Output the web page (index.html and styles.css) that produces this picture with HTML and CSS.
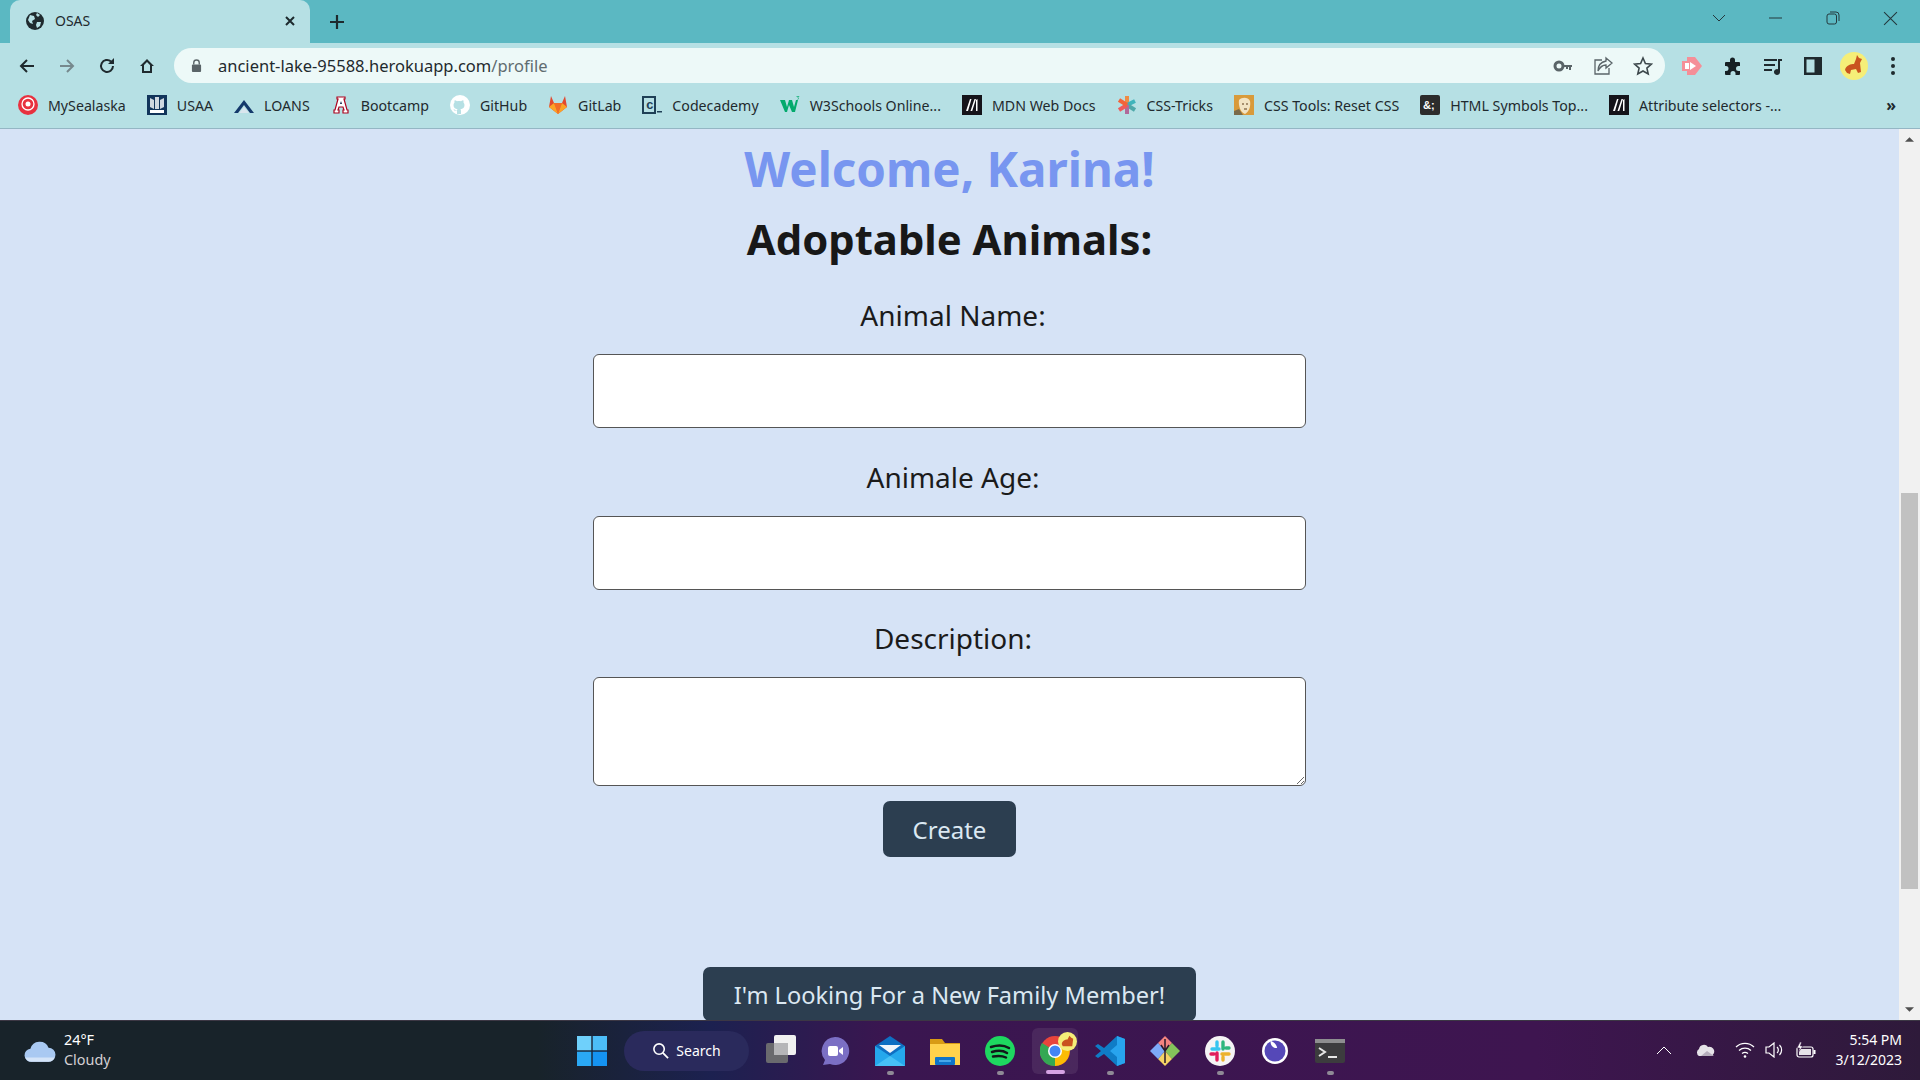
FILE: index.html
```html
<!DOCTYPE html>
<html lang="en">
<head>
<meta charset="utf-8">
<title>OSAS</title>
<link rel="stylesheet" href="styles.css">
</head>
<body>
<div class="screen">
  <div class="tabstrip">
    <div class="tab">
      <svg class="favicon" viewBox="0 0 18 18"><circle cx="9" cy="9" r="9" fill="#1f2a2e"/><path d="M4 3l4 1 1 3-3 2 1 3-3-1-2-3zM11 10l4 0-1 4-3 2-1-3zM11 1l3 2-2 2-2-2z" fill="#b6e0e4"/></svg>
      <span class="tab-title">OSAS</span>
      <svg class="tab-close" viewBox="0 0 12 12"><path d="M2 2l8 8M10 2l-8 8" stroke="#1d2a2e" stroke-width="2" fill="none"/></svg>
    </div>
    <svg class="newtab" viewBox="0 0 16 16"><path d="M8 1v14M1 8h14" stroke="#1d2a2e" stroke-width="2.2" fill="none"/></svg>
    <div class="window-controls">
      <svg class="wc wc-down" viewBox="0 0 14 14"><path d="M1 4l6 6 6-6" stroke="#24383d" fill="none"/></svg>
      <svg class="wc wc-min" viewBox="0 0 14 14"><path d="M0 7h13" stroke="#24383d" fill="none"/></svg>
      <svg class="wc wc-max" viewBox="0 0 14 14"><rect x="1" y="3" width="9.500" height="10" rx="2" stroke="#24383d" fill="none"/><path d="M4 1h6a3 3 0 0 1 3 3v6" stroke="#24383d" fill="none"/></svg>
      <svg class="wc wc-close" viewBox="0 0 14 14"><path d="M1 1l12 12M13 1L1 13" stroke="#24383d" fill="none"/></svg>
    </div>
  </div>

  <div class="toolbar">
    <svg class="tool" viewBox="0 0 18 18"><path d="M16 9H3M9 3L3 9l6 6" stroke="#1f2a2e" stroke-width="2" fill="none"/></svg>
    <svg class="tool" viewBox="0 0 18 18"><path d="M2 9h13M9 3l6 6-6 6" stroke="#76898d" stroke-width="2" fill="none"/></svg>
    <svg class="tool" viewBox="0 0 18 18"><path d="M15 9a6 6 0 1 1-2-4.500" stroke="#1f2a2e" stroke-width="2" fill="none"/><path d="M16 1v6h-6z" fill="#1f2a2e"/></svg>
    <svg class="tool" viewBox="0 0 18 18"><path d="M9 2L2 9h2v7h10V9h2zM6 14V8l3-3 3 3v6z" fill="#1f2a2e"/></svg>
    <div class="omnibox">
      <svg class="lock" viewBox="0 0 12 14"><path d="M3 6V4a3 3 0 0 1 6 0v2" stroke="#5a6468" stroke-width="1.500" fill="none"/><rect x="1" y="6" width="10" height="8" rx="1" fill="#5a6468"/></svg>
      <span class="url">ancient-lake-95588.herokuapp.com<span class="url-path">/profile</span></span>
      <span class="omni-spacer"></span>
      <svg class="omni-icon" viewBox="0 0 20 20"><circle cx="6" cy="10" r="4" fill="none" stroke="#5a6468" stroke-width="3"/><path d="M10 9h9v2h-1v3h-2v-3h-1v2h-2v-2h-3z" fill="#5a6468"/></svg>
      <svg class="omni-icon" viewBox="0 0 20 20"><path d="M9 4H2v14h14v-6" stroke="#5a6468" stroke-width="1.300" fill="none"/><path d="M13 2l6 5-6 5V9c-4 0-6 2-8 6 0-6 3-9 8-10z" stroke="#5a6468" stroke-width="1.300" fill="#edf9f8"/></svg>
      <svg class="omni-icon" viewBox="0 0 20 20"><path d="M10 2l2.400 5.500 6 .6-4.500 4 1.300 5.900L10 15l-5.200 3 1.300-5.900-4.500-4 6-.6z" stroke="#3d484c" stroke-width="1.600" fill="none"/></svg>
    </div>
    <svg class="ext ext-pink" viewBox="0 0 22 20"><path d="M1 5h5V1l8 0 7 9-7 9H6v-4H1z" fill="#f58f98"/><path d="M9 6l6 4-6 4z" fill="#fff"/><rect x="4" y="7" width="4" height="6" fill="#fff"/></svg>
    <svg class="ext" viewBox="0 0 20 20"><path d="M3 6h4V4a2.500 2.500 0 0 1 5 0v2h4a1 1 0 0 1 1 1v3h-1.500a2.500 2.500 0 0 0 0 5H17v3a1 1 0 0 1-1 1h-3.500v-1.500a2.500 2.500 0 0 0-5 0V19H3a1 1 0 0 1-1-1v-3h1a2.500 2.500 0 0 0 0-5H2V7a1 1 0 0 1 1-1z" fill="#162024"/></svg>
    <svg class="ext" viewBox="0 0 20 20"><path d="M1 4h13M1 9h11M1 14h8" stroke="#1f2a2e" stroke-width="2" fill="none"/><path d="M16 3h3v2h-2v11a3 3 0 1 1-2-2.800V3z" fill="#1f2a2e"/></svg>
    <svg class="ext" viewBox="0 0 20 20"><rect x="1" y="1" width="18" height="18" fill="#1f2a2e"/><rect x="3.500" y="3.500" width="8" height="13" fill="#b6e0e4"/></svg>
    <svg class="avatar" viewBox="0 0 28 28"><circle cx="14" cy="14" r="14" fill="#f5ee78"/><path d="M5 18c1-5 6-6 9-6l2-5 1-4 2 3 3 1-2 4 1 9-3 1-2-4-5 1-1 4-3-1z" fill="#c9541f"/></svg>
    <svg class="ext ext-dots" viewBox="0 0 20 20"><circle cx="10" cy="3" r="2" fill="#1f2a2e"/><circle cx="10" cy="10" r="2" fill="#1f2a2e"/><circle cx="10" cy="17" r="2" fill="#1f2a2e"/></svg>
  </div>

  <div class="bookmarks">
    <a class="bm"><svg class="bm-icon" viewBox="0 0 20 20"><circle cx="10" cy="10" r="10" fill="#e8313f"/><circle cx="10" cy="9" r="6" fill="none" stroke="#fff" stroke-width="1.300"/><circle cx="10" cy="9" r="2.500" fill="#fff"/></svg>MySealaska</a>
    <a class="bm"><svg class="bm-icon" viewBox="0 0 20 20"><rect width="20" height="20" fill="#12355b"/><path d="M3 3l4 2v9l-4-2zM17 3l-4 2v9l4-2zM8 2h4v12H8z" fill="#cfd8e0"/><rect x="3" y="15" width="14" height="3" fill="#fff"/></svg>USAA</a>
    <a class="bm"><svg class="bm-icon" viewBox="0 0 20 20"><path d="M0 18L10 5l10 13h-4l-6-8-6 8z" fill="#14396b"/><path d="M5 18l5-6 5 6z" fill="#d9e6ee"/></svg>LOANS</a>
    <a class="bm"><svg class="bm-icon" viewBox="0 0 20 20"><path d="M6 2h8v2h-1l3 11h1v3h-5v-3h1l-1-3H8l-1 3h1v3H3v-3h1L7 4H6z" fill="#fff" stroke="#ab0520" stroke-width="1.200"/><path d="M9 9h2l-1-3z" fill="#0c234b"/></svg>Bootcamp</a>
    <a class="bm"><svg class="bm-icon" viewBox="0 0 20 20"><circle cx="10" cy="10" r="10" fill="#fff"/><path d="M7 19v-3c-2 .4-3-.5-3.500-2 1 .2 1.500 1 2 1.500.5.300 1 .2 1.500 0 0-.6.300-1 .6-1.300C5 14 3.500 12.500 3.500 10c0-1 .3-1.800 1-2.500-.2-.7-.1-1.500.2-2.300.8 0 1.600.4 2.300 1 1.300-.4 2.700-.4 4 0 .7-.6 1.500-1 2.300-1 .3.800.4 1.600.2 2.300.7.700 1 1.500 1 2.500 0 2.500-1.500 4-4.100 4.200.4.400.6 1 .6 1.600V19z" fill="#b6e0e4"/></svg>GitHub</a>
    <a class="bm"><svg class="bm-icon" viewBox="0 0 20 20"><path d="M10 19L1 12 3 1l3 7h8l3-7 2 11z" fill="#e2492f"/><path d="M10 19L6 8h8z" fill="#f26d26"/><path d="M10 19l-9-7 5-4zM10 19l9-7-5-4z" fill="#fca326"/></svg>GitLab</a>
    <a class="bm"><svg class="bm-icon" viewBox="0 0 20 20"><rect x="1" y="2" width="12" height="16" fill="none" stroke="#1f4056" stroke-width="2"/><text class="cc-letter" x="4" y="14">c</text><rect x="15" y="16" width="5" height="1.500" fill="#1f4056"/></svg>Codecademy</a>
    <a class="bm"><svg class="bm-icon" viewBox="0 0 20 20"><path d="M0 5h5l2 7 2-7h3l2 7 2-7h2l-3 12h-3l-3-7-2 7H5z" fill="#04aa6d"/><path d="M16.500 1.500h2.500l-1.200 1.300c.8.200 1 1.500-.2 1.700" stroke="#04aa6d" stroke-width=".7" fill="none"/></svg>W3Schools Online...</a>
    <a class="bm"><svg class="bm-icon" viewBox="0 0 20 20"><rect width="20" height="20" fill="#15141a"/><path d="M4 16L8 4h1.500L6 16zM8.500 16l4-12H14l-3.800 12zM14 16V5l1.500-1v12z" fill="#fff"/></svg>MDN Web Docs</a>
    <a class="bm"><svg class="bm-icon" viewBox="0 0 20 20"><path d="M10 1v9" stroke="#ef8c46" stroke-width="4"/><path d="M10 10l8-4" stroke="#3fb4bb" stroke-width="4"/><path d="M10 10l8 5" stroke="#4fa8a9" stroke-width="4"/><path d="M10 10v9" stroke="#b06a9a" stroke-width="4"/><path d="M10 10l-8 5" stroke="#ee5b5b" stroke-width="4"/><path d="M10 10L2 5" stroke="#f2643a" stroke-width="4"/></svg>CSS-Tricks</a>
    <a class="bm"><svg class="bm-icon" viewBox="0 0 20 20"><rect width="20" height="20" fill="#d99a3a"/><path d="M5 5c3-3 9-3 11 1 1 5-1 11-5 13-4-1-7-8-6-14z" fill="#f2e3c4"/><path d="M8 9h2M12 9h2M10 14h3" stroke="#5a3a1a" stroke-width="1.200"/><path d="M0 20v-4l5-2 4 6z" fill="#7a6a4a"/></svg>CSS Tools: Reset CSS</a>
    <a class="bm"><svg class="bm-icon" viewBox="0 0 20 20"><rect width="20" height="20" rx="2" fill="#2c2c2c"/><text class="amp-text" x="3" y="14">&amp;;</text></svg>HTML Symbols Top...</a>
    <a class="bm"><svg class="bm-icon" viewBox="0 0 20 20"><rect width="20" height="20" fill="#15141a"/><path d="M4 16L8 4h1.500L6 16zM8.500 16l4-12H14l-3.800 12zM14 16V5l1.500-1v12z" fill="#fff"/></svg>Attribute selectors -...</a>
    <span class="bm-more">»</span>
  </div>

  <div class="viewport">
    <main class="page">
      <h1 class="welcome">Welcome, Karina!</h1>
      <h2 class="subhead">Adoptable Animals:</h2>
      <form class="animal-form">
        <label class="field-label">Animal Name:</label>
        <input class="field" type="text">
        <label class="field-label">Animale Age:</label>
        <input class="field" type="text">
        <label class="field-label">Description:</label>
        <textarea class="field field-area"></textarea>
        <button class="btn btn-create" type="button">Create</button>
      </form>
      <button class="btn btn-family" type="button">I'm Looking For a New Family Member!</button>
    </main>
    <div class="scrollbar">
      <svg class="sb-arrow" viewBox="0 0 10 5"><path d="M0 5l5-5 5 5z" fill="#505050"/></svg>
      <div class="sb-track"><div class="sb-thumb"></div></div>
      <svg class="sb-arrow" viewBox="0 0 10 5"><path d="M0 0l5 5 5-5z" fill="#505050"/></svg>
    </div>
  </div>

  <div class="taskbar">
    <div class="weather">
      <svg class="weather-icon" viewBox="0 0 30 22"><path d="M7 21a6 6 0 0 1-1-12 9 9 0 0 1 17-1 6.500 6.500 0 0 1 0 13z" fill="#a9c9f2"/><path d="M7 21c-3 0-5-2-6-4h28c-1 2-3 4-6 4z" fill="#d4e4f8"/></svg>
      <div class="weather-text"><span>24°F</span><span class="weather-sub">Cloudy</span></div>
    </div>
    <div class="task-center">
      <svg class="start" viewBox="0 0 30 30"><rect width="14.300" height="14.300" fill="#6fd0fb"/><rect x="15.700" width="14.300" height="14.300" fill="#4cbdf8"/><rect y="15.700" width="14.300" height="14.300" fill="#2aa8f5"/><rect x="15.700" y="15.700" width="14.300" height="14.300" fill="#1593f2"/></svg>
      <div class="search-pill">
        <svg class="search-icon" viewBox="0 0 18 18"><circle cx="7.500" cy="7.500" r="5.500" stroke="#fff" stroke-width="1.700" fill="none"/><path d="M11.500 11.500L17 17" stroke="#fff" stroke-width="1.900"/></svg>
        <span>Search</span>
      </div>
      <svg class="taskview" viewBox="0 0 30 28"><rect y="8" width="22" height="20" rx="2" fill="#6a6a6e"/><rect x="8" width="22" height="20" rx="2" fill="#f1f1f1"/><rect x="8" y="8" width="14" height="12" fill="#b5b5b8"/></svg>
      <div class="task-apps">
        <div class="app"><svg class="app-icon" viewBox="0 0 30 30"><path d="M15 1a14 14 0 1 1-5 27l-7 1 2-5A14 14 0 0 1 15 1z" fill="#7b6fc4"/><rect x="8" y="10" width="10" height="10" rx="2" fill="#fff"/><path d="M19 14l4-3v8l-4-3z" fill="#fff"/></svg></div>
        <div class="app has-dot"><svg class="app-icon" viewBox="0 0 30 30"><path d="M0 10L15 0l15 10v20H0z" fill="#0f6fc2"/><path d="M0 10l15 10 15-10v20H0z" fill="#25a8ec"/><path d="M4 9h22L15 17z" fill="#f2f6fb"/><path d="M0 30l15-10 15 10z" fill="#47c1f5"/></svg></div>
        <div class="app"><svg class="app-icon" viewBox="0 0 30 30"><path d="M0 3h12l3 4h15v22H0z" fill="#d89b14"/><rect y="8" width="30" height="21" fill="#ffd24c"/><rect x="5" y="21" width="20" height="8" rx="1" fill="#0f74c9"/><rect x="9" y="24" width="12" height="2" fill="#47a8ea"/></svg></div>
        <div class="app has-dot"><svg class="app-icon" viewBox="0 0 30 30"><circle cx="15" cy="15" r="15" fill="#1ed760"/><path d="M6 11c6-2 13-2 18 1M7 16c5-1.500 11-1.500 15 1M8 20.500c5-1 9-1 13 1" stroke="#12181a" stroke-width="2.500" stroke-linecap="round" fill="none"/></svg></div>
        <div class="app app-active"><svg class="app-icon" viewBox="0 0 30 30"><circle cx="15" cy="15" r="15" fill="#e8453c"/><path d="M15 15L2 7A15 15 0 0 0 15 30z" fill="#34a853"/><path d="M15 15l13-7a15 15 0 0 1-13 22z" fill="#fbbc04"/><circle cx="15" cy="15" r="7" fill="#fff"/><circle cx="15" cy="15" r="5.500" fill="#4285f4"/></svg><svg class="app-badge" viewBox="0 0 20 20"><circle cx="10" cy="10" r="10" fill="#f5ee78"/><path d="M4 13c0-3 3-5 6-5l2-4 2 2 2 1-1 8H5z" fill="#c9541f"/></svg></div>
        <div class="app has-dot"><svg class="app-icon" viewBox="0 0 30 30"><path d="M22 0l8 3v24l-8 3-13-12-6 4-3-2 6-5-6-5 3-2 6 4z" fill="#0f7cc6"/><path d="M22 0l8 3v24l-8 3V21l-7-6 7-6z" fill="#28a4ee"/></svg></div>
        <div class="app"><svg class="app-icon" viewBox="0 0 30 30"><path d="M15 0l7 7-7 8-7-8z" fill="#f48480"/><path d="M22 7l8 8-8 8-7-8z" fill="#84c25a"/><path d="M15 15l7 8-7 7-7-7z" fill="#f6d365"/><path d="M8 7l7 8-7 8-8-8z" fill="#7daaf8"/><path d="M15 3v24M11 9l4 6 4-6" stroke="#2a1a2a" stroke-width="1.500" fill="none"/></svg></div>
        <div class="app has-dot"><svg class="app-icon" viewBox="0 0 30 30"><circle cx="15" cy="15" r="15" fill="#f5f4f5"/><path d="M7 13h7M12 6v4" stroke="#36c5f0" stroke-width="3.400" stroke-linecap="round"/><path d="M18 6v7M24 12h-3" stroke="#2eb67d" stroke-width="3.400" stroke-linecap="round"/><path d="M24 18h-7M18 24v-3" stroke="#ecb22e" stroke-width="3.400" stroke-linecap="round"/><path d="M12 24v-7M6 18h3" stroke="#e01e5a" stroke-width="3.400" stroke-linecap="round"/></svg></div>
        <div class="app"><svg class="app-icon app-small" viewBox="0 0 26 26"><circle cx="13" cy="13" r="13" fill="#fff"/><circle cx="13" cy="13" r="10.500" fill="#5548b8"/><path d="M9 3a10 10 0 0 1 6 6c1 2-4 1-5-1-1-1-2-4-1-5z" fill="#fff"/></svg></div>
        <div class="app has-dot"><svg class="app-icon" viewBox="0 0 30 24"><rect width="30" height="24" rx="2" fill="#3c3c3e"/><rect width="30" height="4" fill="#8e8e90"/><path d="M4 9l6 4-6 4" stroke="#e6e6e6" stroke-width="2" fill="none"/><path d="M13 18h9" stroke="#e6e6e6" stroke-width="2"/></svg></div>
      </div>
    </div>
    <div class="tray">
      <svg class="tray-chev" viewBox="0 0 16 8"><path d="M1 8l7-7 7 7" stroke="#fff" fill="none"/></svg>
      <svg class="tray-cloud" viewBox="0 0 20 12"><path d="M4 12a4 4 0 0 1 0-7 5 5 0 0 1 9-2 4.500 4.500 0 0 1 3 9z" fill="#e6e3e8"/><path d="M6 12l6-5 7 5z" fill="#b6adbc"/></svg>
      <svg class="tray-wifi" viewBox="0 0 20 16"><path d="M1 5a13 13 0 0 1 18 0M4 8.500a9 9 0 0 1 12 0M7 11.500a5 5 0 0 1 6 0" stroke="#fff" stroke-width="1.300" fill="none"/><circle cx="10" cy="14.500" r="1.300" fill="#fff"/></svg>
      <svg class="tray-vol" viewBox="0 0 20 16"><path d="M1 5h3l5-4v14l-5-4H1z" stroke="#fff" stroke-width="1.200" fill="none"/><path d="M12 5a4 4 0 0 1 0 6M14.500 3a7 7 0 0 1 0 10" stroke="#fff" stroke-width="1.200" fill="none"/></svg>
      <svg class="tray-bat" viewBox="0 0 20 16"><rect x="1" y="5" width="16" height="10" rx="2" stroke="#fff" stroke-width="1.200" fill="none"/><rect x="3" y="7" width="12" height="6" fill="#e6e3e8"/><rect x="17.500" y="8" width="2" height="4" fill="#fff"/><path d="M4 0L1 6h2.500L2.500 10 7 4H4.500l1-4z" fill="#fff" stroke="#3a1848" stroke-width=".6"/></svg>
      <div class="clock"><span>5:54 PM</span><span>3/12/2023</span></div>
    </div>
  </div>
</div>
</body>
</html>
```
FILE: styles.css
```css
* { box-sizing: border-box; }
html, body { margin: 0; padding: 0; height: 100%; overflow: hidden; }
body { font-family: "Noto Sans", "Open Sans", sans-serif; }
.screen { width: 1920px; height: 1080px; display: flex; flex-direction: column; overflow: hidden; background: #d6e3f6; }

.tabstrip { height: 43px; flex: none; background: #5bb8c2; display: flex; align-items: flex-end; padding-left: 10px; }
.tab { width: 300px; height: 43px; background: #b6e0e4; border-radius: 10px 10px 0 0; display: flex; align-items: center; padding: 0 14px 2px 16px; }
.favicon { width: 18px; height: 18px; flex: none; }
.tab-title { font-size: 14px; color: #1f2a2e; margin-left: 11px; flex: 1; }
.tab-close { width: 12px; height: 12px; flex: none; }
.newtab { width: 16px; height: 16px; margin: 0 0 13px 19px; flex: none; }
.window-controls { margin-left: auto; height: 43px; display: flex; align-items: center; padding: 0 22px 7px 0; gap: 43px; }
.wc { width: 14px; height: 14px; flex: none; }
.wc-close { width: 15px; height: 15px; }

.toolbar { height: 47px; flex: none; background: #b6e0e4; display: flex; align-items: center; padding: 0 0 2px 18px; }
.tool { width: 18px; height: 18px; flex: none; margin-right: 22px; }
.omnibox { width: 1491px; height: 35px; margin-left: -4px; border-radius: 18px; background: #edf9f8; display: flex; align-items: center; padding: 0 12px 0 17px; flex: none; }
.lock { width: 11px; height: 13px; flex: none; }
.url { font-size: 16.500px; color: #1f2a2e; margin-left: 16px; }
.url-path { color: #5f6c70; }
.omni-spacer { flex: 1; }
.omni-icon { width: 20px; height: 20px; flex: none; margin-left: 20px; }
.ext { width: 20px; height: 20px; flex: none; margin-left: 20px; }
.ext-pink { width: 22px; margin-left: 16px; }
.avatar { width: 28px; height: 28px; flex: none; margin-left: 17px; }
.ext-dots { margin-left: 15px; }

.bookmarks { height: 39px; flex: none; background: #b6e0e4; border-bottom: 1px solid #94b6c4; display: flex; align-items: center; padding: 0 0 8px 18px; gap: 21px; font-size: 14.200px; color: #1f2a2e; }
.bm { display: flex; align-items: center; gap: 10px; white-space: nowrap; }
.bm-icon { width: 20px; height: 20px; flex: none; }
.cc-letter { font: bold 13px "Liberation Mono", monospace; fill: #1f4056; }
.amp-text { font: bold 11px "Liberation Sans", sans-serif; fill: #fff; }
.bm-more { margin-left: auto; margin-right: 24px; font-size: 16px; font-weight: 700; }

.viewport { flex: 1; min-height: 0; display: flex; }
.page { flex: 1; min-width: 0; display: flex; flex-direction: column; align-items: center; background: #d6e3f6; overflow: hidden; }
.welcome { margin: 10px 0 0; font-size: 47.500px; line-height: 60px; font-weight: 700; color: #7896f0; }
.subhead { margin: 14px 0 0; font-size: 41.800px; line-height: 52px; font-weight: 700; color: #181818; }
.animal-form { display: flex; flex-direction: column; align-items: center; margin-top: 31px; }
.field-label { font-size: 28px; line-height: 38px; color: #1b1b1b; padding-left: 7px; margin-bottom: 20px; }
.field { display: block; width: 713px; height: 74px; margin: 0 0 29.500px; border: 1px solid #555; border-radius: 6px; background: #fff; padding: 0; }
.field-area { height: 109px; margin-bottom: 15px; }
.btn { border: 0; border-radius: 7px; background: #2c3e50; color: #dbe8f2; font-family: inherit; font-size: 24px; }
.btn-create { width: 133px; height: 56px; }
.btn-family { font-size: 23.600px; width: 493px; height: 54px; padding: 2px 0 0; margin-top: 110px; flex: none; }

.scrollbar { width: 21px; flex: none; background: #f1f1f1; display: flex; flex-direction: column; align-items: center; }
.sb-arrow { width: 9px; height: 5px; flex: none; margin: 8px 0; }
.sb-track { flex: 1; width: 100%; padding: 0 2px; display: flex; flex-direction: column; padding-top: 343px; }
.sb-thumb { height: 396px; background: #c1c1c1; }

.taskbar { height: 60px; flex: none; border-top: 1px solid #3c3744; background: linear-gradient(90deg, #18232a 0%, #18232a 28%, #1c2150 37%, #3a1650 46%, #3e1550 80%, #2e1a3a 100%); display: flex; align-items: center; color: #fff; position: relative; }
.weather { display: flex; align-items: center; margin-left: 24px; width: 553px; flex: none; }
.weather-icon { width: 32px; height: 24px; flex: none; }
.weather-text { display: flex; flex-direction: column; margin: 0 0 2px 8px; font-size: 14.400px; line-height: 20px; }
.weather-sub { color: #d4d0d4; }
.task-center { display: flex; align-items: center; flex: none; }
.start { width: 30px; height: 30px; flex: none; }
.search-pill { width: 125px; height: 40px; margin-left: 17px; border-radius: 20px; background: #2a2a5c; display: flex; align-items: center; justify-content: center; gap: 7px; font-size: 14px; }
.search-icon { width: 17px; height: 17px; flex: none; }
.taskview { width: 30px; height: 28px; flex: none; margin: 0 0 3px 17px; }
.task-apps { display: flex; align-items: center; gap: 9px; margin-left: 16px; }
.app { width: 46px; height: 46px; display: flex; align-items: center; justify-content: center; position: relative; flex: none; }
.app-icon { width: 30px; height: 30px; flex: none; }
.app-small { width: 26px; height: 26px; }
.has-dot::after { content: ""; position: absolute; left: 20px; bottom: -1px; width: 7px; height: 4px; border-radius: 2px; background: #8f8a96; }
.app-active { background: rgba(255, 255, 255, .08); border-radius: 6px; }
.app-active::after { content: ""; position: absolute; left: 14px; bottom: 0; width: 19px; height: 4px; border-radius: 2px; background: #d6a2e4; }
.app-badge { position: absolute; width: 19px; height: 19px; right: 1px; top: 4px; }
.tray { margin-left: auto; display: flex; align-items: center; padding: 0 18px 2px 0; }
.tray-chev { width: 16px; height: 8px; flex: none; margin-right: 23px; }
.tray-cloud { width: 20px; height: 12px; flex: none; margin-right: 20px; }
.tray-wifi { width: 20px; height: 16px; flex: none; margin-right: 10px; }
.tray-vol { width: 20px; height: 16px; flex: none; margin-right: 11px; }
.tray-bat { width: 20px; height: 16px; flex: none; margin-right: 20px; }
.clock { display: flex; flex-direction: column; align-items: flex-end; font-size: 14px; line-height: 20px; }
```
